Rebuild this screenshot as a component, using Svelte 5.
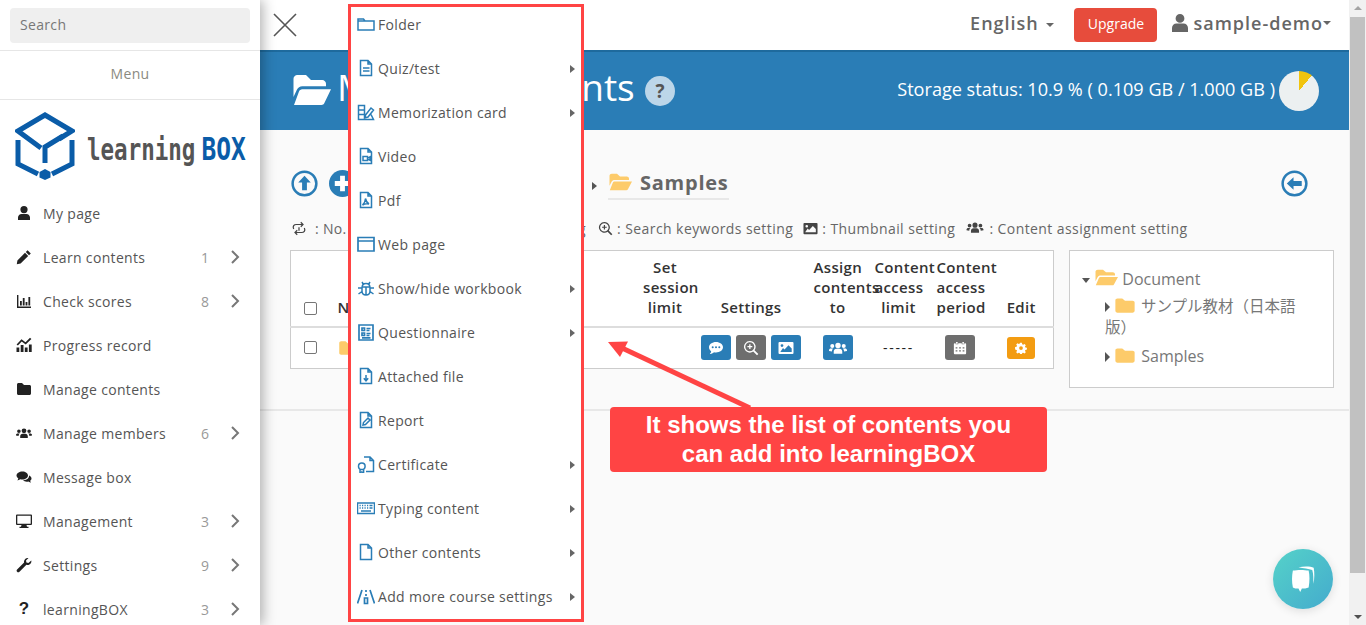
<script>
	const glyphs = {
		user: 'M8 1a3.6 3.6 0 1 1 0 7.2A3.6 3.6 0 0 1 8 1zM2 15v-2.4C2 10.6 3.6 9 5.6 9h4.8c2 0 3.6 1.6 3.6 3.6V15z',
		pencil: 'M11.6 1.2l3.2 3.2-1.8 1.8-3.2-3.2zM9 3.8L12.2 7l-7.6 7.6-3.8.6.6-3.8z',
		bars: 'M1 2h1.400v11.600H15V15H1zM4 8h1.800v4.600H4zM6.800 5h1.800v7.600H6.800zM9.600 9h1.800v3.600H9.600zM12.400 4h1.800v8.600h-1.800z',
		progress: 'M.5 10.500h2.800V15H.5zM4.700 8h2.800v7H4.700zM8.800 10.500h2.800V15H8.800zM12.900 7.500h2.800V15h-2.800zM.6 7.400L5.500 2.200l4 3L14 .8l1.400 1.200-5.700 5.400-4-3-3.800 4z',
		folder: 'M1 3.500C1 2.700 1.700 2 2.500 2H6l2 2h5.500c.8 0 1.500.7 1.500 1.500v7c0 .8-.7 1.500-1.500 1.500h-11C1.700 14 1 13.300 1 12.500z',
		users: 'M8 3.400a2.400 2.400 0 1 1 0 4.800 2.400 2.400 0 0 1 0-4.800zM2.900 4.400a1.800 1.800 0 1 1 0 3.600 1.800 1.800 0 0 1 0-3.600zM13.100 4.400a1.800 1.800 0 1 1 0 3.600 1.800 1.800 0 0 1 0-3.600zM4.200 13v-1.800c0-1.500 1-2.500 2.400-2.500h2.800c1.400 0 2.400 1 2.400 2.500V13zM0 10.600V10c0-1 .8-1.500 1.800-1.500h2c-.8.6-1.100 1.300-1.200 2.500zM16 10.600V10c0-1-.8-1.500-1.800-1.500h-2c.8.6 1.100 1.300 1.200 2.500z',
		comments: 'M6.500 2.500c3 0 5.500 1.700 5.500 4s-2.500 4-5.500 4c-.8 0-1.500-.1-2.100-.3L1.500 11.500l.8-2.200C1.200 8.500.5 7.600.5 6.500c0-2.300 2.700-4 6-4zM13 6.500c1.500.6 2.500 1.700 2.500 3 0 .9-.5 1.700-1.300 2.300l.6 2-2.500-1.200c-2 .5-4.300 0-5.300-1.500 3.700.3 6.300-1.800 6-4.600z',
		desktop: 'M1 1.500h14a1 1 0 0 1 1 1V11a1 1 0 0 1-1 1h-4.500l.5 1.800h1.500V15h-9v-1.200H5l.5-1.800H1a1 1 0 0 1-1-1V2.500a1 1 0 0 1 1-1zM1.300 2.800v7.900h13.400V2.800z',
		wrench: 'M15.300 3.500c.5 2.200-1.200 4.500-3.500 4.500-.5 0-1 0-1.400-.2L3.500 14.700c-.7.7-1.800.7-2.400 0-.7-.7-.6-1.700 0-2.300l7-6.900C7.600 3 9.800.4 12.500 1L10 3.500l.4 2 2 .5z',
		speech: 'M8 2c3.900 0 7 2.300 7 5.200s-3.100 5.200-7 5.200c-.7 0-1.400-.1-2-.2C4.800 13.100 3.300 14 1.800 14c.8-.8 1.300-1.700 1.400-2.800C1.900 10.200 1 8.800 1 7.200 1 4.300 4.100 2 8 2zM4.700 6.300a1 1 0 1 0 0 2 1 1 0 0 0 0-2zM8 6.300a1 1 0 1 0 0 2 1 1 0 0 0 0-2zM11.300 6.300a1 1 0 1 0 0 2 1 1 0 0 0 0-2z',
		zoom: 'M6.800 1a5.800 5.800 0 0 1 4.700 9.200l3.800 3.800-1.300 1.300-3.800-3.800A5.800 5.800 0 1 1 6.800 1zm0 1.300a4.500 4.500 0 1 0 0 9 4.500 4.500 0 0 0 0-9zM6.200 4.300h1.300V6h1.800v1.300H7.500v1.800H6.200V7.300H4.400V6h1.800z',
		picture: 'M1.500 2h13a1 1 0 0 1 1 1v10a1 1 0 0 1-1 1h-13a1 1 0 0 1-1-1V3a1 1 0 0 1 1-1zM4 4.200a1.400 1.400 0 1 0 0 2.800 1.400 1.400 0 0 0 0-2.800zM2.300 12h11.400V8.500L10.500 5.300 6.500 9.500 5 8z',
		calendar: 'M3.500 1h1.800v2H3.500zM10.700 1h1.800v2h-1.800zM2 2.500h1v1.300h3V2.500h4v1.300h3V2.500h1a1 1 0 0 1 1 1V14a1 1 0 0 1-1 1H2a1 1 0 0 1-1-1V3.500a1 1 0 0 1 1-1zM3 7v1.600h2V7zM7 7v1.600h2V7zM11 7v1.600h2V7zM3 10.500v1.600h2v-1.600zM7 10.500v1.600h2v-1.600zM11 10.500v1.600h2v-1.600z',
		gear: 'M6.800 1h2.400l.4 2 1.300.6 1.800-1.100 1.700 1.700-1.100 1.800.6 1.300 2 .4v2.400l-2 .4-.6 1.300 1.100 1.800-1.700 1.700-1.800-1.100-1.300.6-.4 2H6.800l-.4-2-1.300-.6-1.800 1.100-1.700-1.700 1.100-1.800-.6-1.300-2-.4V6.800l2-.4.6-1.300-1.100-1.800 1.700-1.700 1.800 1.100 1.300-.6zM8 5.500a2.500 2.500 0 1 0 0 5 2.500 2.500 0 0 0 0-5z',
		folderOpen: 'M1 3.500C1 2.700 1.700 2 2.500 2H6l2 2h4.500c.8 0 1.500.7 1.500 1.500V6.500H4.500c-1 0-1.700.5-2.100 1.300L1 10.800zM4.500 7.700H16l-2.700 5.600c-.2.400-.6.700-1.100.7H1.200l2-5.400c.2-.5.700-.9 1.300-.9z'
	};

	const navItems = [
		{ icon: 'user', label: 'My page' },
		{ icon: 'pencil', label: 'Learn contents', count: 1 },
		{ icon: 'bars', label: 'Check scores', count: 8 },
		{ icon: 'progress', label: 'Progress record' },
		{ icon: 'folder', label: 'Manage contents' },
		{ icon: 'users', label: 'Manage members', count: 6 },
		{ icon: 'comments', label: 'Message box' },
		{ icon: 'desktop', label: 'Management', count: 3 },
		{ icon: 'wrench', label: 'Settings', count: 9 },
		{ icon: null, label: 'learningBOX', count: 3 }
	];

	// stroke drawings for the add-content menu, 18 unit box
	const page = 'M3.500 1.500h7.500l3.500 3.500v11.500h-11zM11 1.500V5h3.500';
	const addItems = [
		{ label: 'Folder', d: 'M1 15V4h5.500l1.500 2h9v9zM1 6h7' },
		{ label: 'Quiz/test', sub: true, d: page + 'M6 9h6.500M6 12h6.500' },
		{ label: 'Memorization card', sub: true, d: 'M1.500 2.500h6v14h-6zM1.500 7h6M1.500 11.500h6M7.500 16.500h9l-2.500-5M8.500 12l5.500-7 2.500 2-5.500 7-3 .8z' },
		{ label: 'Video', d: page + 'M6 9.500h4.500v4H6zM10.500 11.300l2.500-1.500v3.500l-2.500-1.500' },
		{ label: 'Pdf', d: page + 'M8.500 7.500c0 3-1.500 5-3 6.500 2.500-1.500 4-1.500 6.500-1-2-1-3-3-3.500-5.500z' },
		{ label: 'Web page', thick: true, d: 'M1 2.500h16v13.500H1zM1 6h16' },
		{ label: 'Show/hide workbook', sub: true, d: 'M5 9c0-2.500 1.500-4.500 4-4.500s4 2 4 4.500v3c0 2.500-1.800 4-4 4s-4-1.500-4-4zM6.500 5.500L5 3M11.500 5.500L13 3M5 9H1M13 9h4M5 12.500l-3.500 2.500M13 12.500l3.500 2.500M9 8v8M5.500 8h7' },
		{ label: 'Questionnaire', sub: true, thick: true, d: 'M2 2h14v15H2zM5 5h2.500v2.500H5zM5 10h2.500v2.500H5zM9.500 5.500h4M9.500 7.500h3M9.500 10.500h4M9.500 12.500h3M5 14.800h8.500' },
		{ label: 'Attached file', d: page + 'M9 8v5.500M6.800 11.300L9 13.800l2.200-2.500' },
		{ label: 'Report', d: page + 'M6 14l.5-2.500 4.500-4.500 2 2-4.500 4.500z' },
		{ label: 'Certificate', sub: true, d: 'M7 2h6l3.500 3.500v11H9M13 2v3.500h3.500M4.800 8a3.300 3.300 0 1 1 0 6.600 3.300 3.300 0 0 1 0-6.600zM3 14.500V18l1.800-1.200L6.600 18v-3.500' },
		{ label: 'Typing content', sub: true, d: 'M.5 4h17v10.500H.5zM2.500 6.500h1.200M5 6.500h1.200M7.500 6.500h1.200M10 6.500h1.200M12.500 6.500h3M2.500 9h1.200M5 9h1.200M7.500 9h1.200M10 9h1.200M12.500 9h3M4 12h10' },
		{ label: 'Other contents', sub: true, d: page },
		{ label: 'Add more course settings', sub: true, thick: true, d: 'M5 3L.5 16.500M13 3l4.500 13.500M9 3v2M9 7v2M7.500 11h3v5.500h-3z' }
	];

	const trees = [
		{ label: 'サンプル教材（日本語版）', ja: true },
		{ label: 'Samples' }
	];
</script>

<div class="app">
	<aside class="sidebar">
		<div class="search"><div class="search-box">Search</div></div>
		<div class="menu-title">Menu</div>
		<div class="logo">
			<svg class="logo-mark" viewBox="0 0 60 68" width="60" height="68" fill="none" stroke="#0a5ca8" stroke-width="5">
				<path d="M26 36L3 19 30 3l27 16-13 8" />
				<path d="M30 51V35l18-11" />
				<path d="M3 28v24l20 10" />
				<path d="M57 28v24L37 62" />
				<path d="M30 57l5.500 3v5.500l-5.500 2.500-5.500-2.500V60z" fill="#0a5ca8" stroke="none" />
			</svg>
			<div class="logo-text">learning<span>BOX</span></div>
		</div>
		<nav>
			{#each navItems as item}
				<div class="nav-item">
					<span class="nav-icon">
						{#if item.icon}
							<svg viewBox="0 0 16 16" width="16" height="16"><path d={glyphs[item.icon]} fill-rule="evenodd" /></svg>
						{:else}
							<b>?</b>
						{/if}
					</span>
					<span class="nav-label">{item.label}</span>
					{#if item.count}
						<span class="nav-count">{item.count}</span>
						<svg class="chevron" viewBox="0 0 10 16" width="10" height="16"><path d="M2 2l6 6-6 6" /></svg>
					{/if}
				</div>
			{/each}
		</nav>
	</aside>

	<main class="main">
		<header class="topbar">
			<svg class="close" viewBox="0 0 24 24" width="24" height="24"><path d="M1 1l22 22M23 1L1 23" /></svg>
			<div class="lang">English <i class="caret"></i></div>
			<div class="upgrade">Upgrade</div>
			<div class="account">
				<svg viewBox="0 0 16 18" width="16" height="18"><path d="M8 0a4.400 4.400 0 1 1 0 8.800A4.400 4.400 0 0 1 8 0zM0 18v-4c0-2.500 2-4.500 4.500-4.500h7c2.500 0 4.500 2 4.500 4.500v4z" /></svg>
				sample-demo<i class="caret"></i>
			</div>
		</header>

		<section class="band">
			<svg class="band-folder" viewBox="0 0 16 16" width="40" height="40"><path d={glyphs.folderOpen} /></svg>
			<h1>Manage contents</h1>
			<span class="help">?</span>
			<div class="storage">Storage status: 10.9 % ( 0.109 GB / 1.000 GB )</div>
			<div class="pie"></div>
		</section>

		<section class="content">
			<div class="toolbar">
				<svg class="round" viewBox="0 0 28 28" width="27" height="27"><circle cx="14" cy="14" r="12.300" fill="none" stroke="#2a7db6" stroke-width="2.600" /><path d="M14 6l6.500 7h-4v8h-5v-8h-4z" fill="#2a7db6" /></svg>
				<svg class="round" viewBox="0 0 28 28" width="27" height="27"><circle cx="14" cy="14" r="14" fill="#2a7db6" /><path d="M11.500 6h5v5.500H22v5h-5.500V22h-5v-5.500H6v-5h5.500z" fill="#fff" /></svg>
				<i class="crumb-arrow"></i>
				<div class="crumb">
					<svg viewBox="0 0 16 16" width="24" height="22" preserveAspectRatio="none"><path d={glyphs.folderOpen} fill="#fdcb6a" /></svg>
					Samples
				</div>
				<svg class="round back" viewBox="0 0 28 28" width="27" height="27"><circle cx="14" cy="14" r="12.300" fill="none" stroke="#2a7db6" stroke-width="2.600" /><path d="M6 14l7-6.500v4h8.500v5H13v4z" fill="#2a7db6" /></svg>
			</div>

			<div class="legend">
				<span class="legend-first">
					<span>
						<svg class="repeat" viewBox="0 0 18 16" width="16" height="15"><path d="M3 8.500C1.500 5.500 3.500 3.500 6 3.500h7M11 1l2.500 2.500L11 6M15 7.500c1.500 3 -.5 5 -3 5H5M7 15l-2.500-2.500L7 10M9 6.500v4" /></svg>
						&nbsp;: No. of attempts
					</span>
					<span>: Comment setting</span>
				</span>
				<span class="legend-rest">
					<svg viewBox="0 0 16 16" width="15" height="15"><path d={glyphs.zoom} fill-rule="evenodd" /></svg>
					: Search keywords setting
					<svg class="gap" viewBox="0 0 16 16" width="15" height="15"><path d={glyphs.picture} fill-rule="evenodd" /></svg>
					: Thumbnail setting
					<svg class="gap" viewBox="0 0 16 16" width="20" height="17"><path d={glyphs.users} /></svg>
					: Content assignment setting
				</span>
			</div>

			<div class="columns">
				<table>
					<colgroup>
						<col style="width:40px" /><col style="width:299px" /><col style="width:71px" /><col style="width:101px" />
						<col style="width:72px" /><col style="width:50px" /><col style="width:74px" /><col style="width:56px" />
					</colgroup>
					<thead>
						<tr>
							<th><span class="check"></span></th>
							<th class="left name">Name</th>
							<th><div class="narrow thin">Set<br />session<br />limit</div></th>
							<th>Settings</th>
							<th><div class="narrow">Assign<br />contents<br />to</div></th>
							<th><div class="narrow">Content<br />access<br />limit</div></th>
							<th><div class="narrow">Content<br />access<br />period</div></th>
							<th class="edit">Edit</th>
						</tr>
					</thead>
					<tbody>
						<tr>
							<td><span class="check row-check"></span></td>
							<td class="left name">
								<svg class="row-folder" viewBox="0 0 16 16" width="20" height="18" preserveAspectRatio="none"><path d={glyphs.folder} fill="#fdcb6a" /></svg>
							</td>
							<td></td>
							<td>
								<span class="btns">
									<span class="btn blue"><svg viewBox="0 0 16 16" width="16" height="16"><path d={glyphs.speech} fill-rule="evenodd" /></svg></span>
									<span class="btn grey"><svg viewBox="0 0 16 16" width="16" height="16"><path d={glyphs.zoom} fill-rule="evenodd" /></svg></span>
									<span class="btn blue"><svg viewBox="0 0 16 16" width="16" height="16"><path d={glyphs.picture} fill-rule="evenodd" /></svg></span>
								</span>
							</td>
							<td><span class="btn blue"><svg viewBox="0 0 16 16" width="20" height="18"><path d={glyphs.users} /></svg></span></td>
							<td class="dash">-----</td>
							<td class="period-btn"><span class="btn grey"><svg viewBox="0 0 16 16" width="14" height="14"><path d={glyphs.calendar} fill-rule="evenodd" /></svg></span></td>
							<td class="edit"><span class="btn orange"><svg viewBox="0 0 16 16" width="12" height="12"><path d={glyphs.gear} fill-rule="evenodd" /></svg></span></td>
						</tr>
					</tbody>
				</table>

				<div class="tree">
					<div class="tree-root">
						<i class="tree-down"></i>
						<svg viewBox="0 0 16 16" width="24" height="21" preserveAspectRatio="none"><path d={glyphs.folderOpen} fill="#fdcb6a" /></svg>
						Document
					</div>
					{#each trees as node}
						<div class="tree-node" class:ja={node.ja}>
							<i class="tree-right"></i>
							<svg viewBox="0 0 16 16" width="22" height="19" preserveAspectRatio="none"><path d={glyphs.folder} fill="#fdcb6a" /></svg>
							{node.label}
						</div>
					{/each}
				</div>
			</div>

			<div class="rule"></div>
		</section>
	</main>

	<div class="scrollbar">
		<i class="sb-up"></i>
		<div class="sb-thumb"></div>
		<i class="sb-down"></i>
	</div>

	<div class="add-menu">
		{#each addItems as item}
			<div class="add-item">
				<svg viewBox="0 0 18 18" width="18" height="18"><path d={item.d} stroke-width={item.thick ? 1.700 : 1.500} /></svg>
				<span>{item.label}</span>
				{#if item.sub}<i class="sub-arrow"></i>{/if}
			</div>
		{/each}
	</div>

	<svg class="pointer" viewBox="0 0 150 80" width="150" height="80">
		<path d="M142 69L14 9" stroke="#ff4444" stroke-width="5" fill="none" />
		<path d="M0 3l20-.5-8 15.500z" fill="#ff4444" />
	</svg>

	<div class="callout">It shows the list of contents you<br />can add into learningBOX</div>

	<div class="chat">
		<svg viewBox="0 0 32 32" width="36" height="36">
			<path d="M12 5.500c5-.8 11-.8 13.500.5.800 4 .8 10-.3 14.500 0-4 .2-9-1-12.500-3-1.200-8-1.500-12.200-2.500z" fill="#fff" />
			<path d="M7 8.500c4-.8 10-.8 14 0 1 4 1 10 0 15-2 .8-4 1-6 1l-1.500 3-1.500-3c-2 0-3.800-.2-5-1-1-5-1-10 0-15z" fill="#fff" />
		</svg>
	</div>
</div>

<style>
	:global(body) {
		margin: 0;
		background: #fafafa;
	}
	.app {
		position: relative;
		display: flex;
		width: 1366px;
		height: 625px;
		overflow: hidden;
		font-family: 'Open Sans', 'Noto Sans CJK JP', sans-serif;
		font-size: 14px;
		letter-spacing: 0.33px;
		color: #555;
	}

	/* sidebar */
	.sidebar {
		flex: 0 0 260px;
		position: relative;
		z-index: 2;
		background: #fff;
		box-shadow: 3px 0 12px rgba(0, 0, 0, 0.3);
	}
	.search {
		height: 51px;
		padding: 8px 10px 0;
		box-sizing: border-box;
		border-bottom: 1px solid #e6e6e6;
	}
	.search-box {
		height: 35px;
		line-height: 34px;
		padding-left: 10px;
		background: #efefef;
		border-radius: 4px;
		color: #777;
	}
	.menu-title {
		height: 48px;
		line-height: 46px;
		text-align: center;
		color: #8a8a7f;
		border-bottom: 1px solid #e6e6e6;
	}
	.logo {
		display: flex;
		align-items: flex-start;
		height: 91px;
		padding: 12px 0 0 15px;
		box-sizing: border-box;
	}
	.logo-text {
		margin: 19px 0 0 12px;
		font-family: 'DejaVu Sans Mono', monospace;
		font-weight: 700;
		font-size: 22.5px;
		letter-spacing: 0;
		line-height: 28px;
		color: #555;
		transform: scaleY(1.33);
		transform-origin: left top;
		white-space: nowrap;
	}
	.logo-text span {
		color: #0a5ca8;
		margin-left: 6px;
		font-size: 24.5px;
	}
	.nav-item {
		display: flex;
		align-items: center;
		height: 44px;
		padding-left: 16px;
	}
	.nav-icon {
		display: flex;
		justify-content: center;
		width: 16px;
		margin-right: 11px;
		color: #222;
		font-size: 17px;
		font-family: 'Liberation Sans', sans-serif;
	}
	.nav-icon svg {
		fill: #222;
	}
	.nav-label {
		flex: 1;
	}
	.nav-count {
		width: 29px;
		color: #999;
	}
	.chevron {
		margin-right: 20px;
		fill: none;
		stroke: #777;
		stroke-width: 2;
	}

	/* main column */
	.main {
		flex: 1;
		display: flex;
		flex-direction: column;
		min-width: 0;
		background: #fafafa;
	}
	.topbar {
		display: flex;
		align-items: center;
		height: 50px;
		padding-left: 13px;
		background: #fff;
		color: #666;
		font-weight: 600;
		font-size: 18px;
		letter-spacing: 1px;
	}
	.close {
		fill: none;
		stroke: #555;
		stroke-width: 1.600;
	}
	.lang {
		margin-left: auto;
		margin-right: 20px;
		padding-bottom: 4px;
	}
	.caret {
		display: inline-block;
		margin-left: 2px;
		vertical-align: middle;
		border: 4px solid transparent;
		border-top-color: #666;
		border-bottom: 0;
	}
	.upgrade {
		width: 83px;
		height: 34px;
		line-height: 32px;
		text-align: center;
		background: #e74c3c;
		border-radius: 4px;
		color: #fff;
		font-size: 14px;
		font-weight: 400;
		letter-spacing: 0;
	}
	.account {
		display: flex;
		align-items: center;
		gap: 5px;
		margin: 0 18px 0 15px;
		padding-bottom: 4px;
	}
	.account svg {
		fill: #666;
	}
	.account .caret {
		margin-left: -5px;
	}
	.band {
		display: flex;
		align-items: center;
		height: 80px;
		box-sizing: border-box;
		padding: 0 0 5px 31px;
		background: #2a7db6;
		border-top: 2px solid #1e6a9d;
		color: #fff;
		letter-spacing: 0;
	}
	.band-folder {
		fill: #fff;
		margin: 2px 6px 0 0;
	}
	.band h1 {
		margin: -4px 10px 0 0;
		font-size: 37px;
		font-weight: 400;
		white-space: nowrap;
		width: 298px;
	}
	.help {
		width: 30px;
		height: 30px;
		line-height: 30px;
		text-align: center;
		border-radius: 50%;
		background: #bcd6e9;
		color: #555;
		font-weight: 700;
		font-size: 19px;
		margin-top: 4px;
	}
	.storage {
		margin-left: auto;
		font-size: 18.1px;
		white-space: nowrap;
	}
	.pie {
		width: 40px;
		height: 40px;
		margin: 5px 30px 0 4px;
		border-radius: 50%;
		background: conic-gradient(#f1c40f 0 10.9%, #ecf0f1 10.9% 100%);
	}
	.content {
		flex: 1;
		padding: 40px 15px 0 30px;
	}
	.toolbar {
		display: flex;
		align-items: flex-start;
		height: 30px;
		padding-left: 1px;
		padding-right: 26px;
	}
	.round + .round {
		margin-left: 11px;
	}
	.crumb-arrow {
		margin: 12px 0 0 236px;
		border: 4px solid transparent;
		border-left: 5px solid #555;
		border-right: 0;
	}
	.crumb {
		display: flex;
		align-items: center;
		gap: 8px;
		margin-left: 11px;
		height: 24px;
		padding-bottom: 4px;
		border-bottom: 2px solid #e8e8e8;
		font-size: 20px;
		font-weight: 700;
		letter-spacing: 0.75px;
		color: #666;
	}
	.back {
		margin-left: auto;
	}
	.legend {
		display: flex;
		align-items: center;
		height: 20px;
		margin-top: 18px;
		white-space: nowrap;
		color: #666;
	}
	.legend svg {
		fill: #444;
		vertical-align: -2px;
	}
	.legend svg.repeat {
		fill: none;
		stroke: #444;
		stroke-width: 1.400;
		margin-left: 1px;
	}
	.legend svg.gap {
		margin-left: 6px;
	}
	.legend-first {
		display: flex;
		justify-content: space-between;
		width: 296px;
		margin-right: 12px;
	}
	.legend-rest {
		letter-spacing: 0.42px;
	}
	.columns {
		display: flex;
		align-items: flex-start;
		gap: 15px;
		margin-top: 12px;
	}
	table {
		width: 763px;
		table-layout: fixed;
		border-collapse: collapse;
		border: 1px solid #ccc;
		background: #fff;
		color: #333;
	}
	th {
		height: 76px;
		box-sizing: border-box;
		padding: 0 0 9px;
		vertical-align: bottom;
		text-align: center;
		font-size: 15px;
		font-weight: 600;
		line-height: 20px;
		white-space: nowrap;
		border-bottom: 2px solid #ddd;
	}
	td {
		height: 40px;
		padding: 0;
		text-align: center;
		vertical-align: middle;
		white-space: nowrap;
	}
	.narrow {
		width: 48px;
		margin: 0 auto;
		text-align: center;
	}
	.narrow.thin {
		width: 44px;
	}
	.left {
		text-align: left;
	}
	.name {
		padding-left: 7px;
	}
	.dash {
		letter-spacing: 1.700px;
		color: #222;
	}
	.period-btn {
		padding-right: 2px;
	}
	.edit {
		padding-right: 8px;
	}
	.check {
		display: inline-block;
		width: 13px;
		height: 13px;
		box-sizing: border-box;
		border: 1px solid #767676;
		border-radius: 2px;
		background: #fff;
		vertical-align: middle;
	}
	.row-check {
		margin-top: -3px;
	}
	.row-folder {
		vertical-align: middle;
		margin-top: -3px;
	}
	.btns {
		display: inline-flex;
		gap: 5px;
	}
	.btn {
		display: inline-flex;
		align-items: center;
		justify-content: center;
		width: 30px;
		height: 25px;
		border-radius: 3px;
		vertical-align: middle;
	}
	.btn svg {
		fill: #fff;
	}
	.blue {
		background: #2a7db6;
	}
	.grey {
		background: #6e6e6e;
	}
	.orange {
		width: 28px;
		height: 22px;
		background: #f39c12;
	}
	.tree {
		flex: 1;
		height: 138px;
		box-sizing: border-box;
		padding: 16px 20px 0 12px;
		border: 1px solid #ccc;
		background: #fff;
		font-size: 16px;
		letter-spacing: 0;
		line-height: 21px;
		color: #777;
	}
	.tree svg {
		vertical-align: -3px;
	}
	.tree-root {
		height: 21px;
		margin-bottom: 8px;
	}
	.tree-node {
		margin: 0 0 8px 23px;
	}
	.tree-node svg {
		margin-right: 1px;
	}
	.tree-node.ja {
		font-size: 15.5px;
	}
	.tree-down {
		display: inline-block;
		vertical-align: 2px;
		border: 4px solid transparent;
		border-top: 5px solid #555;
		border-bottom: 0;
	}
	.tree-right {
		display: inline-block;
		vertical-align: 0;
		border: 5px solid transparent;
		border-left: 5px solid #555;
		border-right: 0;
	}
	.rule {
		height: 2px;
		margin: 21px -15px 0 -30px;
		background: #e8e8e8;
	}

	/* page scrollbar */
	.scrollbar {
		position: relative;
		flex: 0 0 17px;
		background: #f1f1f1;
	}
	.sb-thumb {
		position: absolute;
		left: 1px;
		right: 1px;
		top: 17px;
		height: 556px;
		background: #c1c1c1;
	}
	.sb-up,
	.sb-down {
		position: absolute;
		left: 5px;
		border: 4px solid transparent;
		border-top: 0;
		border-bottom: 4px solid #a3a3a3;
		top: 6px;
	}
	.sb-down {
		top: auto;
		bottom: 6px;
		border-bottom: 0;
		border-top: 4px solid #505050;
	}

	/* overlays */
	.add-menu {
		position: absolute;
		z-index: 3;
		left: 348px;
		top: 4px;
		width: 236px;
		height: 618px;
		box-sizing: border-box;
		overflow: hidden;
		border: 3px solid #ff4444;
		background: #fff;
	}
	.add-item {
		display: flex;
		align-items: center;
		position: relative;
		height: 44px;
		padding-left: 6px;
		gap: 3px;
		color: #555;
		white-space: nowrap;
	}
	.add-item:first-child {
		margin-top: -5px;
	}
	.add-item svg {
		flex: none;
		fill: none;
		stroke: #2a7db6;
	}
	.sub-arrow {
		position: absolute;
		right: 6px;
		top: 19px;
		border: 4px solid transparent;
		border-left: 5px solid #666;
		border-right: 0;
	}
	.pointer {
		position: absolute;
		z-index: 4;
		left: 608px;
		top: 339px;
	}
	.callout {
		position: absolute;
		z-index: 5;
		left: 610px;
		top: 407px;
		width: 437px;
		height: 65px;
		box-sizing: border-box;
		padding-top: 3px;
		text-align: center;
		background: #ff4444;
		border-radius: 4px;
		color: #fff;
		font-family: 'Liberation Sans', sans-serif;
		font-weight: 700;
		font-size: 24px;
		letter-spacing: 0;
		line-height: 29px;
	}
	.chat {
		position: absolute;
		z-index: 5;
		left: 1273px;
		top: 549px;
		display: flex;
		align-items: center;
		justify-content: center;
		width: 60px;
		height: 60px;
		border-radius: 50%;
		background: linear-gradient(135deg, #55d2c9, #44abcd);
		box-shadow: 0 2px 10px rgba(0, 0, 0, 0.12);
	}
</style>
